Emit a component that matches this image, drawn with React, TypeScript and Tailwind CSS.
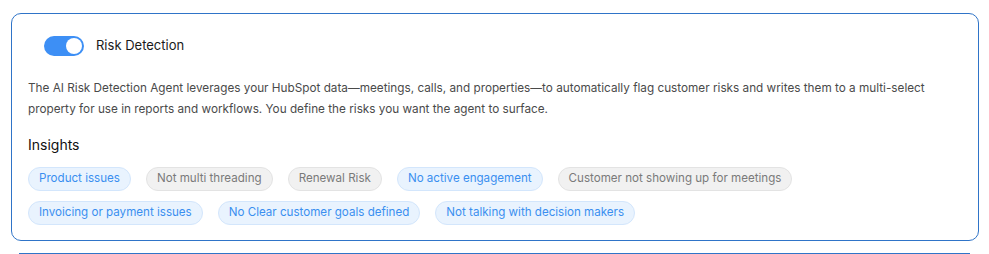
const INSIGHTS = [
  [
    { label: 'Product issues', active: true },
    { label: 'Not multi threading', active: false },
    { label: 'Renewal Risk', active: false },
    { label: 'No active engagement', active: true },
    { label: 'Customer not showing up for meetings', active: false },
  ],
  [
    { label: 'Invoicing or payment issues', active: true },
    { label: 'No Clear customer goals defined', active: true },
    { label: 'Not talking with decision makers', active: true },
  ],
]

function Chip({ label, active }: { label: string; active: boolean }) {
  return (
    <span
      className={`flex h-[24px] items-center rounded-full border px-[10px] text-[11.6px] ${
        active
          ? 'border-[#d3e6fc] bg-[#e9f3fe] text-[#3a8ff0]'
          : 'border-[#e3e3e3] bg-[#f1f1f1] text-[#7a7a7a]'
      }`}
    >
      {label}
    </span>
  )
}

export default function App() {
  return (
    <div
      className="h-[254px] w-[989px] overflow-hidden bg-white pt-[13px]"
      style={{ fontFamily: "Inter, 'Noto Sans', sans-serif" }}
    >
      {/* Card */}
      <div className="ml-[11px] w-[968px] rounded-[10px] border border-[#2f74c8] px-[16px] pb-[15px] pt-[22px]">
        {/* Toggle row */}
        <div className="flex items-center gap-[12px] pl-[16px]">
          <div className="flex h-[20px] w-[40px] items-center justify-end rounded-full bg-[#3d8ff5] pr-[2px]">
            <div className="h-[16px] w-[16px] rounded-full bg-white" />
          </div>
          <span className="text-[13px] text-[#1a1a1a]">Risk Detection</span>
        </div>

        {/* Description */}
        <p className="mt-[22px] text-[11.75px] leading-[21px] text-[#4a4a4a]">
          The AI Risk Detection Agent leverages your HubSpot data—meetings, calls, and properties—to automatically
          flag customer risks and writes them to a multi-select property for use in reports and workflows. You
          define the risks you want the agent to surface.
        </p>

        {/* Insights */}
        <h3 className="mt-[15px] text-[14px] leading-[20px] text-[#111]">Insights</h3>
        <div className="mt-[12px] flex flex-col gap-[10px]">
          {INSIGHTS.map((row, i) => (
            <div key={i} className="flex gap-[15px]">
              {row.map((c) => (
                <Chip key={c.label} label={c.label} active={c.active} />
              ))}
            </div>
          ))}
        </div>
      </div>

      {/* Next card edge */}
      <div className="ml-[19px] mt-[12px] h-px w-[951px] bg-[#2f74c8]" />
    </div>
  )
}
